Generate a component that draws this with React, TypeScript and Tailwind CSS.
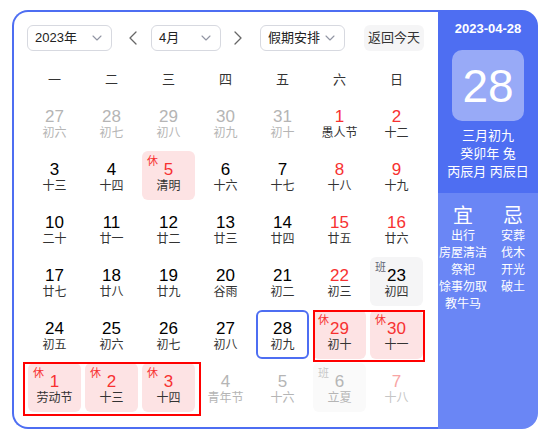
import React from "react";

type Cell = {
  d: string;
  l: string;
  kind?: "out" | "outRed" | "red";
  tag?: "休" | "班";
  today?: boolean;
  lunarDark?: boolean;
  outBan?: boolean;
};

const rows: Cell[][] = [
  [
    { d: "27", l: "初六", kind: "out" },
    { d: "28", l: "初七", kind: "out" },
    { d: "29", l: "初八", kind: "out" },
    { d: "30", l: "初九", kind: "out" },
    { d: "31", l: "初十", kind: "out" },
    { d: "1", l: "愚人节", kind: "red" },
    { d: "2", l: "十二", kind: "red" },
  ],
  [
    { d: "3", l: "十三" },
    { d: "4", l: "十四" },
    { d: "5", l: "清明", kind: "red", tag: "休" },
    { d: "6", l: "十六" },
    { d: "7", l: "十七" },
    { d: "8", l: "十八", kind: "red" },
    { d: "9", l: "十九", kind: "red" },
  ],
  [
    { d: "10", l: "二十" },
    { d: "11", l: "廿一" },
    { d: "12", l: "廿二" },
    { d: "13", l: "廿三" },
    { d: "14", l: "廿四" },
    { d: "15", l: "廿五", kind: "red" },
    { d: "16", l: "廿六", kind: "red" },
  ],
  [
    { d: "17", l: "廿七" },
    { d: "18", l: "廿八" },
    { d: "19", l: "廿九" },
    { d: "20", l: "谷雨" },
    { d: "21", l: "初二" },
    { d: "22", l: "初三", kind: "red" },
    { d: "23", l: "初四", tag: "班" },
  ],
  [
    { d: "24", l: "初五" },
    { d: "25", l: "初六" },
    { d: "26", l: "初七" },
    { d: "27", l: "初八" },
    { d: "28", l: "初九", today: true },
    { d: "29", l: "初十", kind: "red", tag: "休" },
    { d: "30", l: "十一", kind: "red", tag: "休" },
  ],
  [
    { d: "1", l: "劳动节", kind: "red", tag: "休" },
    { d: "2", l: "十三", kind: "red", tag: "休" },
    { d: "3", l: "十四", kind: "red", tag: "休" },
    { d: "4", l: "青年节", kind: "out" },
    { d: "5", l: "十六", kind: "out" },
    { d: "6", l: "立夏", kind: "out", tag: "班", outBan: true },
    { d: "7", l: "十八", kind: "outRed" },
  ],
];

const Chevron = () => (
  <svg width="12" height="12" viewBox="0 0 12 12" fill="none">
    <path d="M2 4l4 4 4-4" stroke="#9195a3" strokeWidth="1.1" strokeLinecap="round" strokeLinejoin="round" />
  </svg>
);

const Arrow = ({ dir }: { dir: "l" | "r" }) => (
  <svg width="10" height="16" viewBox="0 0 10 16" fill="none">
    {dir === "l" ? (
      <path d="M8 2L2 8l6 6" stroke="#666" strokeWidth="1.3" strokeLinecap="round" strokeLinejoin="round" />
    ) : (
      <path d="M2 2l6 6-6 6" stroke="#666" strokeWidth="1.3" strokeLinecap="round" strokeLinejoin="round" />
    )}
  </svg>
);

function Select({ label, w }: { label: string; w: string }) {
  return (
    <div
      className={`${w} h-[26px] flex items-center justify-between pl-[7px] pr-[8px] border border-[#d7d9e0] rounded-[6px] bg-white text-[13px] text-[#222]`}
    >
      <span>{label}</span>
      <Chevron />
    </div>
  );
}

function DayCell({ c }: { c: Cell }) {
  let bg = "";
  if (c.tag === "休") bg = "bg-[#fde3e4]";
  else if (c.tag === "班") bg = c.outBan ? "bg-[#fafafa]" : "bg-[#f5f5f6]";
  const border = c.today ? "border-2 border-[#4e6ef2]" : "";
  let numColor = "text-[#000]";
  let lunarColor = "text-[#333]";
  if (c.kind === "out") {
    numColor = "text-[#b5b5b5]";
    lunarColor = "text-[#b5b5b5]";
  } else if (c.kind === "outRed") {
    numColor = "text-[#f8a5a5]";
    lunarColor = "text-[#c5c5c5]";
  } else if (c.kind === "red") {
    numColor = "text-[#f73131]";
  }
  if (c.outBan) {
    numColor = "text-[#b5b5b5]";
    lunarColor = "text-[#b5b5b5]";
  }
  return (
    <div className="w-[57px] h-[53px] px-[2px] pb-[4px]">
      <div
        className={`relative w-full h-full rounded-[6px] flex flex-col items-center ${bg} ${border} ${c.today ? "pt-[8px]" : "pt-[10px]"}`}
      >
        {c.tag && (
          <span
            className={`absolute left-[5px] top-[4px] text-[11px] leading-[12px] ${
              c.tag === "休" ? "text-[#f73131]" : c.outBan ? "text-[#c8c8c8]" : "text-[#626675]"
            }`}
          >
            {c.tag}
          </span>
        )}
        <span className={`text-[17px] leading-[18px] ${numColor}`}>{c.d}</span>
        <span className={`text-[12px] leading-[14px] ${lunarColor}`}>{c.l}</span>
      </div>
    </div>
  );
}

export default function App() {
  const week = ["一", "二", "三", "四", "五", "六", "日"];
  return (
    <div
      className="w-[550px] h-[440px] bg-white pt-[10px] pl-[12px]"
      style={{ fontFamily: '"Liberation Sans", "Noto Sans CJK SC", sans-serif' }}
    >
      <div className="relative flex w-[526px] h-[419px]">
        {/* Left panel */}
        <div className="w-[426px] h-full border-2 border-r-0 border-[#4e6ef2] rounded-l-[16px] pl-[12px] pt-[13px]">
          <div className="flex items-center h-[26px] pl-[1px]">
            <Select label="2023年" w="w-[85px]" />
            <div className="ml-[16px] mr-[13px] w-[10px] flex justify-center">
              <Arrow dir="l" />
            </div>
            <Select label="4月" w="w-[70px]" />
            <div className="ml-[12px] mr-[17px] w-[10px] flex justify-center">
              <Arrow dir="r" />
            </div>
            <Select label="假期安排" w="w-[85px]" />
            <div className="ml-[19px] w-[60px] h-[26px] rounded-[6px] bg-[#f5f5f6] text-[13px] text-[#333] flex items-center justify-center">
              返回今天
            </div>
          </div>
          <div className="mt-[11px] h-[36px] flex items-center">
            {week.map((w) => (
              <div key={w} className="w-[57px] text-center text-[13px] text-[#333]">
                {w}
              </div>
            ))}
          </div>
          <div className="flex flex-col">
            {rows.map((r, i) => (
              <div key={i} className="flex">
                {r.map((c, j) => (
                  <DayCell key={j} c={c} />
                ))}
              </div>
            ))}
          </div>
        </div>

        {/* Right panel */}
        <div className="w-[100px] h-full rounded-r-[16px] overflow-hidden flex flex-col text-white">
          <div className="h-[183px] bg-[#4e6ef2] flex flex-col items-center pt-[10px]">
            <div className="text-[13px] leading-[18px] font-bold">2023-04-28</div>
            <div className="mt-[12px] w-[72px] h-[71px] rounded-[10px] bg-[#98aaf7] flex items-center justify-center text-[46px] leading-none">
              28
            </div>
            <div className="mt-[6px] flex flex-col items-center text-[13px] leading-[18px]">
              <span>三月初九</span>
              <span>癸卯年 兔</span>
              <span>丙辰月 丙辰日</span>
            </div>
          </div>
          <div className="flex-1 bg-[#6a86f5] flex pt-[12px]">
            <div className="w-1/2 flex flex-col items-center">
              <div className="text-[20px] leading-[22px]">宜</div>
              <div className="flex flex-col items-center text-[12px] leading-[17px] mt-[1px]">
                <span>出行</span>
                <span>房屋清洁</span>
                <span>祭祀</span>
                <span>馀事勿取</span>
                <span>教牛马</span>
              </div>
            </div>
            <div className="w-1/2 flex flex-col items-center">
              <div className="text-[20px] leading-[22px]">忌</div>
              <div className="flex flex-col items-center text-[12px] leading-[17px] mt-[1px]">
                <span>安葬</span>
                <span>伐木</span>
                <span>开光</span>
                <span>破土</span>
              </div>
            </div>
          </div>
        </div>

        {/* Red annotation boxes */}
        <div className="absolute left-[301px] top-[300px] w-[112px] h-[52px] border-2 border-[#ff0000] pointer-events-none" />
        <div className="absolute left-[11px] top-[352px] w-[178px] h-[54px] border-2 border-[#ff0000] pointer-events-none" />
      </div>
    </div>
  );
}
